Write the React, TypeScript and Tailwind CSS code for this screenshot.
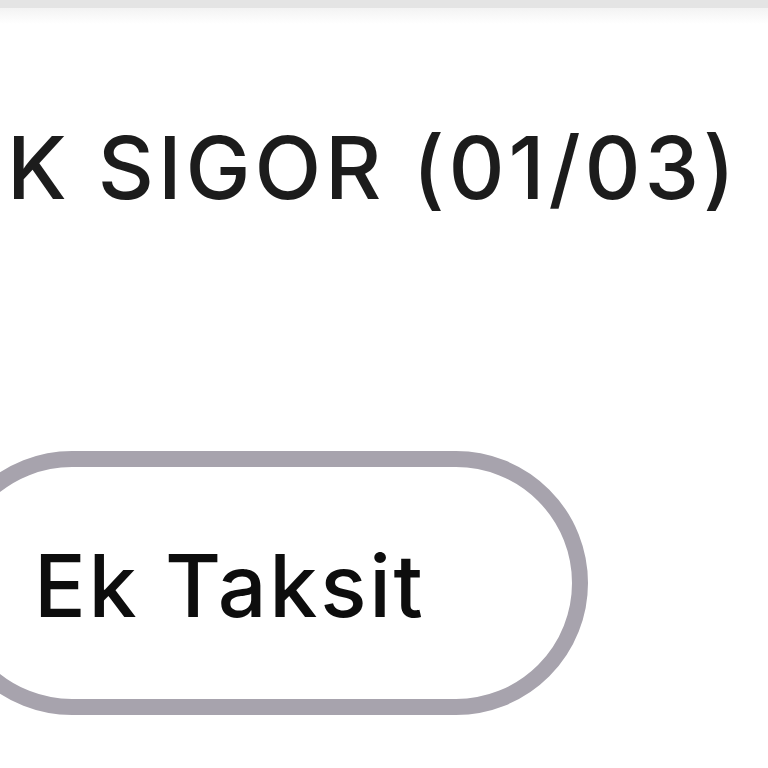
export default function App() {
  return (
    <div className="w-[768px] h-[768px] overflow-hidden bg-white" style={{ fontFamily: "Inter, 'Noto Sans', sans-serif" }}>
      {/* top edge of the card */}
      <div className="h-[8px] bg-[#e4e4e4]" />
      <div className="h-[16px] bg-gradient-to-b from-[#f3f3f3] to-white" />

      {/* policy title */}
      <div className="mt-[100px] flex justify-end pr-[29px]">
        <p className="whitespace-nowrap text-[87px] leading-none font-medium text-[#1c1c1c] tracking-[3.9px]">
          K SIGOR (01/03)
        </p>
      </div>

      {/* installment pill */}
      <div className="mt-[240px] -ml-[60px] w-[648px] h-[264px] rounded-full border-[16px] border-[#a7a3ad] flex items-center pl-[78px] pt-[6px]">
        <span className="whitespace-nowrap text-[86px] leading-none font-medium text-[#0d0d0d] tracking-[2.75px]">
          Ek Taksit
        </span>
      </div>
    </div>
  );
}
